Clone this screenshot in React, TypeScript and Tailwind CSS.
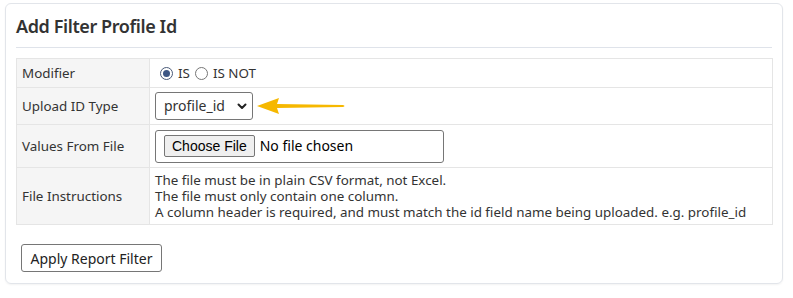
import React from "react";

export default function App() {
  const font = { fontFamily: '"Noto Sans", "Open Sans", sans-serif' };
  return (
    <div className="w-[793px] h-[298px] bg-white pt-[3px] pl-[5px]" style={font}>
      <div className="w-[778px] h-[281px] border border-[#e2e5ea] rounded-[6px] px-[10px] pt-[10px] shadow-[0_1px_2px_rgba(0,0,0,0.05)]">
        <div className="h-[34px] border-b border-[#dfe3ea] text-[18px] font-semibold text-[#333] leading-[25px] tracking-[-0.4px]">
          Add Filter Profile Id
        </div>
        <table className="mt-[10px] w-[757px] border-collapse text-[13.4px] text-[#333] leading-[16px]">
          <tbody>
            <tr className="h-[29px]">
              <td className="w-[133px] bg-[#f5f5f5] border border-[#e5e5e5] px-[5px] align-middle">Modifier</td>
              <td className="border border-[#e5e5e5] px-[5px] align-middle">
                <div className="flex items-center">
                  <span className="w-[13px] h-[13px] rounded-full border border-[#4a5a78] flex items-center justify-center ml-[5px]">
                    <span className="w-[7px] h-[7px] rounded-full bg-[#3d5684]" />
                  </span>
                  <span className="ml-[5px]">IS</span>
                  <span className="w-[13px] h-[13px] rounded-full border border-[#767676] ml-[5px]" />
                  <span className="ml-[5px]">IS NOT</span>
                </div>
              </td>
            </tr>
            <tr className="h-[37px]">
              <td className="bg-[#f5f5f5] border border-[#e5e5e5] px-[5px] align-middle">Upload ID Type</td>
              <td className="border border-[#e5e5e5] px-[5px] align-middle">
                <div className="flex items-center">
                  <div className="w-[98px] h-[28px] border border-[#767676] rounded-[3px] flex items-center justify-between pl-[8px] pr-[4px] text-[14px]">
                    <span>profile_id</span>
                    <svg width="12" height="12" viewBox="0 0 12 12">
                      <path d="M2.5 4.5 L6 8 L9.5 4.5" fill="none" stroke="#222" strokeWidth="2" strokeLinecap="round" strokeLinejoin="round" />
                    </svg>
                  </div>
                  <svg width="92" height="20" viewBox="0 0 92 20" className="ml-[2px]">
                    <path d="M2 10 L24 2 L22 8 L88 9 Q91 10 88 11 L22 12 L24 18 Z" fill="#f6b800" />
                  </svg>
                </div>
              </td>
            </tr>
            <tr className="h-[43px]">
              <td className="bg-[#f5f5f5] border border-[#e5e5e5] px-[5px] align-middle">Values From File</td>
              <td className="border border-[#e5e5e5] px-[5px] align-middle">
                <div className="w-[289px] h-[33px] border border-[#767676] rounded-[3px] flex items-center pl-[8px]">
                  <div className="h-[22px] px-[7px] bg-[#efefef] border border-[#767676] rounded-[2px] flex items-center text-[14px] text-black" style={{ fontFamily: '"Liberation Sans", Arial, sans-serif' }}>
                    Choose File
                  </div>
                  <span className="ml-[5px] text-[14px] text-black">No file chosen</span>
                </div>
              </td>
            </tr>
            <tr className="h-[57px]">
              <td className="bg-[#f5f5f5] border border-[#e5e5e5] px-[5px] align-middle">File Instructions</td>
              <td className="border border-[#e5e5e5] px-[5px] align-middle">
                <div>The file must be in plain CSV format, not Excel.</div>
                <div>The file must only contain one column.</div>
                <div>A column header is required, and must match the id field name being uploaded. e.g. profile_id</div>
              </td>
            </tr>
          </tbody>
        </table>
        <div className="mt-[19px] ml-[5px] w-[141px] h-[28px] border border-[#767676] rounded-[3px] flex items-center justify-center text-[14px] text-[#222]">
          Apply Report Filter
        </div>
      </div>
    </div>
  );
}
